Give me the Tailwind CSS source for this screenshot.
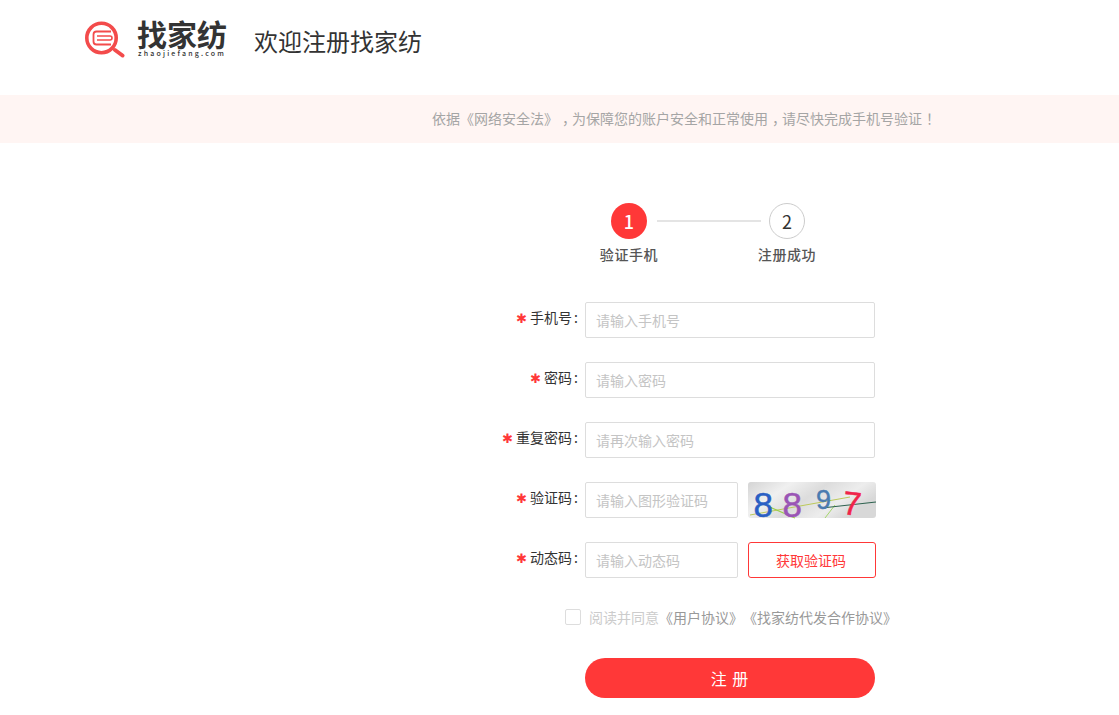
<!DOCTYPE html>
<html lang="zh-CN">
<head>
    <meta charset="UTF-8">
    <title>欢迎注册找家纺</title>
    <script src="https://cdn.jsdelivr.net/npm/@tailwindcss/browser@4"></script>
</head>
<body class="bg-white font-['Noto_Sans_CJK_SC','Noto_Sans',sans-serif] text-[14px] text-[#333] overflow-hidden [text-spacing-trim:space-all]">

    <!-- 头部 -->
    <header class="h-[95px] flex items-start pl-[85px]">
        <svg class="mt-[20px] shrink-0" width="42" height="38" viewBox="0 0 42 38" fill="none">
            <circle cx="16.5" cy="18" r="14.7" stroke="#f34b4b" stroke-width="3.6"/>
            <path d="M30 30l7.5 5.5" stroke="#f34b4b" stroke-width="4" stroke-linecap="round"/>
            <path d="M26 11.5H11.5a3 3 0 0 0-3 3v7a3 3 0 0 0 3 3H26" stroke="#f34b4b" stroke-width="1.8"/>
            <path d="M12 16h13a2 2 0 0 1 0 4H12" stroke="#f34b4b" stroke-width="1.6"/>
        </svg>
        <div class="ml-[11px] mt-[17px] w-[90px] shrink-0">
            <div class="-ml-[1px] text-[30px] leading-[32px] font-bold text-[#333] whitespace-nowrap">找家纺</div>
            <div class="text-[7px] leading-[8px] tracking-[2.2px] font-medium text-[#333] whitespace-nowrap">zhaojiefang.com</div>
        </div>
        <h1 class="ml-[26px] mt-[24px] text-[24px] leading-[34px] font-normal text-[#333] whitespace-nowrap">欢迎注册找家纺</h1>
    </header>

    <!-- 提示条 -->
    <div class="h-12 bg-[#fff5f3] pl-[432px] pb-[2px] flex items-center text-[14px] text-[#a5a5a5] whitespace-nowrap"><p>依据《网络安全法》<span class="ml-[4px] tracking-[-4px]">，</span>为保障您的账户安全和正常使用<span class="ml-[4px] tracking-[-4px]">，</span>请尽快完成手机号验证<span class="ml-[4px]">！</span></p></div>

    <!-- 步骤 -->
    <div class="pt-[60px] pl-[600px] flex items-start">
        <div class="w-[58px] flex flex-col items-center shrink-0">
            <div class="w-9 h-9 rounded-full bg-[#ff3838] text-white text-[18px] font-medium flex items-center justify-center">1</div>
            <div class="mt-[5px] text-[14px] leading-[20px] tracking-[0.6px] font-medium text-[#555] whitespace-nowrap">验证手机</div>
        </div>
        <div class="w-[104px] h-[2px] bg-[#e4e4e4] mt-[17px] -ml-[1px] shrink-0"></div>
        <div class="w-[58px] flex flex-col items-center shrink-0 -ml-[3px]">
            <div class="w-9 h-9 rounded-full bg-white border border-[#ccc] text-[#333] text-[18px] flex items-center justify-center">2</div>
            <div class="mt-[5px] text-[14px] leading-[20px] tracking-[0.6px] font-medium text-[#555] whitespace-nowrap">注册成功</div>
        </div>
    </div>

    <!-- 表单 -->
    <form class="pt-[38px] flex flex-col gap-6">
        <div class="flex items-start h-9">
            <label class="w-[579px] pr-[1px] pt-[5px] leading-[20px] text-right text-[#333] whitespace-nowrap"><span class="text-[#ff3838] text-[13px] mr-[3px] font-['DejaVu_Sans']">✱</span>手机号<span class="ml-[2px]">:</span></label>
            <input class="ml-[6px] w-[290px] h-9 border border-[#ddd] rounded-[2px] px-[10px] outline-none placeholder:text-[#c4c4c4]" placeholder="请输入手机号">
        </div>
        <div class="flex items-start h-9">
            <label class="w-[579px] pr-[1px] pt-[5px] leading-[20px] text-right text-[#333] whitespace-nowrap"><span class="text-[#ff3838] text-[13px] mr-[3px] font-['DejaVu_Sans']">✱</span>密码<span class="ml-[2px]">:</span></label>
            <input class="ml-[6px] w-[290px] h-9 border border-[#ddd] rounded-[2px] px-[10px] outline-none placeholder:text-[#c4c4c4]" placeholder="请输入密码">
        </div>
        <div class="flex items-start h-9">
            <label class="w-[579px] pr-[1px] pt-[5px] leading-[20px] text-right text-[#333] whitespace-nowrap"><span class="text-[#ff3838] text-[13px] mr-[3px] font-['DejaVu_Sans']">✱</span>重复密码<span class="ml-[2px]">:</span></label>
            <input class="ml-[6px] w-[290px] h-9 border border-[#ddd] rounded-[2px] px-[10px] outline-none placeholder:text-[#c4c4c4]" placeholder="请再次输入密码">
        </div>
        <div class="flex items-start h-9">
            <label class="w-[579px] pr-[1px] pt-[5px] leading-[20px] text-right text-[#333] whitespace-nowrap"><span class="text-[#ff3838] text-[13px] mr-[3px] font-['DejaVu_Sans']">✱</span>验证码<span class="ml-[2px]">:</span></label>
            <input class="ml-[6px] w-[153px] h-9 border border-[#ddd] rounded-[2px] px-[10px] outline-none placeholder:text-[#c4c4c4]" placeholder="请输入图形验证码">
            <!-- 图形验证码 -->
            <svg class="ml-[10px] overflow-visible" width="128" height="36" viewBox="0 0 128 36">
                <defs>
                    <linearGradient id="captchaBg" x1="0" y1="0" x2="1" y2="0.4">
                        <stop offset="0" stop-color="#d4d4d4"/>
                        <stop offset="0.3" stop-color="#f0f0f0"/>
                        <stop offset="0.55" stop-color="#dcdcdc"/>
                        <stop offset="0.8" stop-color="#ededed"/>
                        <stop offset="1" stop-color="#d8d8d8"/>
                    </linearGradient>
                </defs>
                <rect width="128" height="36" rx="3" fill="url(#captchaBg)"/>
                <path d="M2 33L102 15" stroke="#bcc95a" stroke-width="1"/>
                <path d="M17 23L47 36" stroke="#9ccf4a" stroke-width="1.2"/>
                <path d="M77 36L87 23" stroke="#a5d66a" stroke-width="1"/>
                <path d="M74 26L128 20" stroke="#2f6350" stroke-width="1.2"/>
                <text x="5.5" y="34.5" font-family="Liberation Sans, sans-serif" font-size="35" fill="#2a5fc4" stroke="#2a5fc4" stroke-width="0.5">8</text>
                <text x="34.5" y="35" font-family="Liberation Sans, sans-serif" font-size="35" fill="#9a55b5" stroke="#9a55b5" stroke-width="0.5">8</text>
                <text x="68" y="27" font-family="Liberation Sans, sans-serif" font-size="27" fill="#4a7bb0" stroke="#4a7bb0" stroke-width="0.4">9</text>
                <text x="95" y="33" font-family="Liberation Sans, sans-serif" font-size="33" fill="#f0244a" stroke="#f0244a" stroke-width="0.5" transform="rotate(6 104 20)">7</text>
            </svg>
        </div>
        <div class="flex items-start h-9">
            <label class="w-[579px] pr-[1px] pt-[5px] leading-[20px] text-right text-[#333] whitespace-nowrap"><span class="text-[#ff3838] text-[13px] mr-[3px] font-['DejaVu_Sans']">✱</span>动态码<span class="ml-[2px]">:</span></label>
            <input class="ml-[6px] w-[153px] h-9 border border-[#ddd] rounded-[2px] px-[10px] outline-none placeholder:text-[#c4c4c4]" placeholder="请输入动态码">
            <button type="button" class="ml-[10px] w-[128px] h-9 pr-[2px] border border-[#ff3838] rounded-[3px] text-[#ff3838] text-[14px]">获取验证码</button>
        </div>

        <!-- 协议 -->
        <div class="flex items-center pl-[565px] mt-[5px] h-5 whitespace-nowrap">
            <span class="w-4 h-4 border border-[#ddd] rounded-[2px] bg-white shrink-0"></span>
            <span class="ml-2 text-[#ccc]">阅读并同意</span><span class="text-[#999]">《用户协议》《找家纺代发合作协议》</span>
        </div>

        <div class="pl-[585px] mt-[7px]">
            <button type="button" class="w-[290px] h-10 rounded-full bg-[#ff3838] text-white text-[16px] tracking-[1px]">注 册</button>
        </div>
    </form>

</body>
</html>
